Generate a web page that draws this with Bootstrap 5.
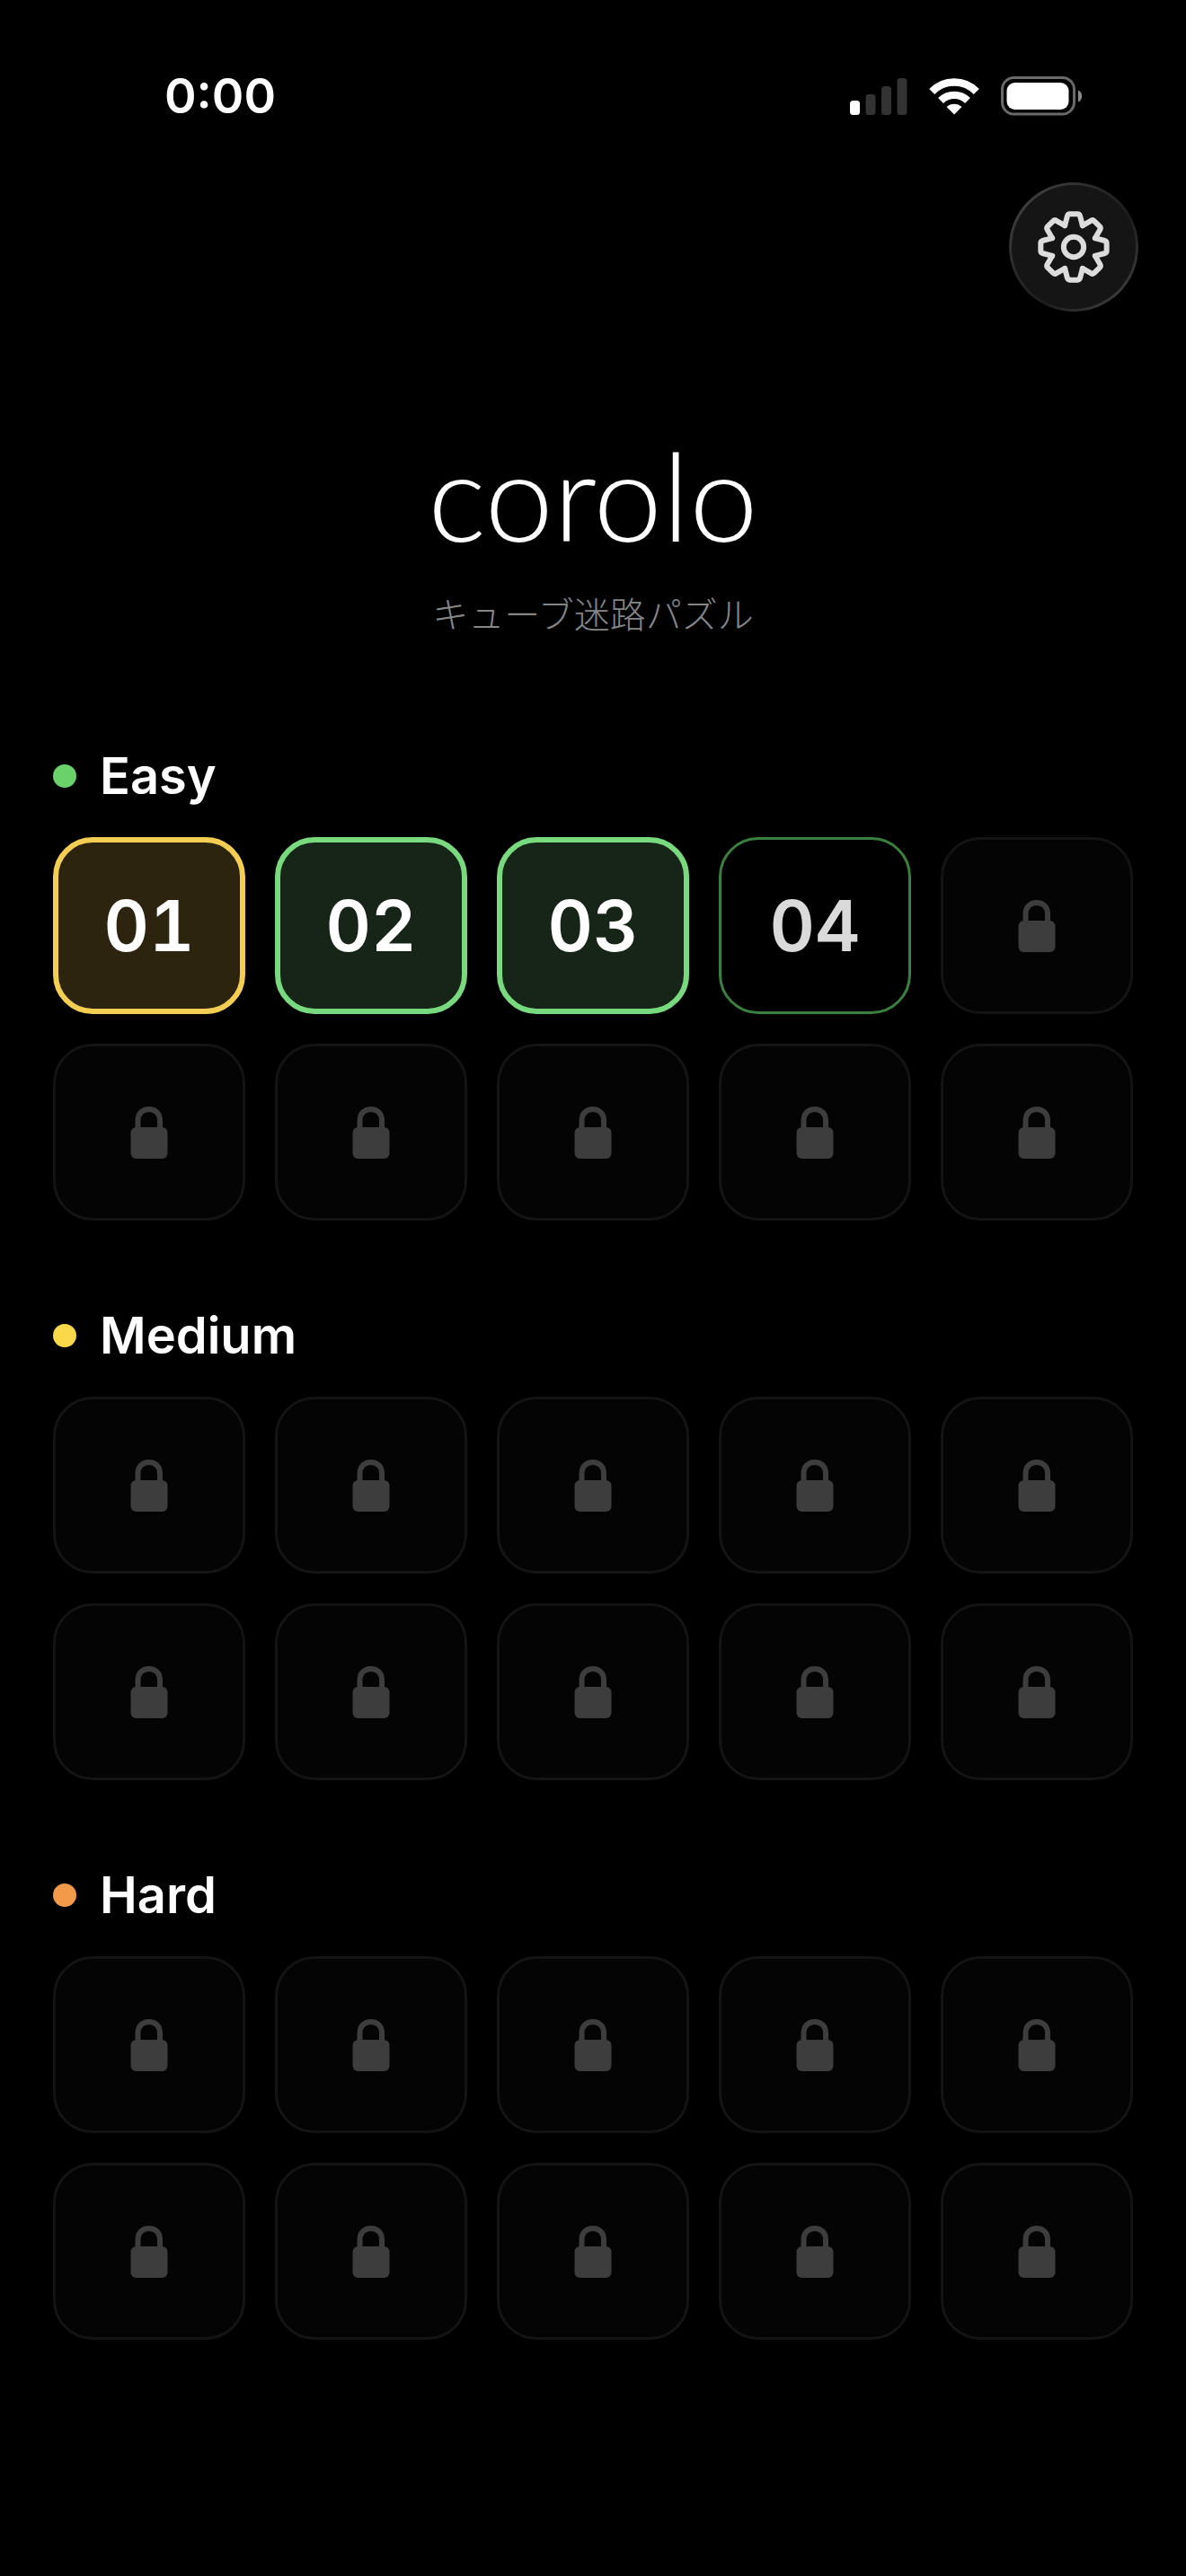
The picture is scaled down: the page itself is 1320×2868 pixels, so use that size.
<!DOCTYPE html>
<html lang="ja" data-bs-theme="dark">
<head>
<meta charset="utf-8">
<meta name="viewport" content="width=device-width, initial-scale=1">
<title>corolo</title>
<link href="https://cdn.jsdelivr.net/npm/bootstrap@5.3.0/dist/css/bootstrap.min.css" rel="stylesheet">
<style>
  body { background: #000; color: #fff; font-family: Inter, "Noto Sans CJK JP", sans-serif; }
  .status-bar { padding: 71px 116px 0 183px; }
  .clock { font-size: 54px; line-height: 72px; font-weight: 600; }
  .status-icons { gap: 24px; }
  .toolbar { padding: 60px 53px 0; }
  .btn-gear {
    width: 144px; height: 144px; border: 3px solid transparent;
    background: linear-gradient(#151515, #151515) padding-box,
                linear-gradient(135deg, #4a4a4a, #2a2a2a 35%, #1c1c1c 60%, #4a4a4a) border-box;
  }
  .app-title { font-family: Lato, Inter, sans-serif; font-size: 137px; line-height: 160px; font-weight: 300; margin: 123px 0 22px; }
  .app-subtitle { font-family: "Noto Sans CJK JP", sans-serif; font-size: 40px; line-height: 60px; font-weight: 300; color: #868686; margin-bottom: 120px; }
  .levels { padding: 0 59px; }
  .level-group { margin-bottom: 96px; }
  .level-head { gap: 26px; height: 64px; margin-bottom: 36px; }
  .level-head h2 { font-size: 56px; line-height: 64px; font-weight: 600; }
  .level-dot { width: 26px; height: 26px; }
  .dot-easy { background: #6bd16b; }
  .dot-medium { background: #f9d949; }
  .dot-hard { background: #f2994a; }
  .level-grid { --bs-gutter-x: 33px; --bs-gutter-y: 33px; }
  .tile {
    height: 197px; border-radius: 44px; border: 3px solid #141414; background: #040404;
    font-size: 78px; line-height: 80px; font-weight: 600; font-variant-numeric: tabular-nums; color: #fff;
  }
  .tile:disabled { opacity: 1; border-color: #141414; background: #040404; }
  .tile-gold { border: 6px solid #f3ce53; background: #2d2410; }
  .tile-done { border: 6px solid #78d97e; background: #172518; }
  .tile-open { border-color: #3a803e; background: #000; color: #dadada; }
</style>
<script src="https://cdn.jsdelivr.net/npm/bootstrap@5.3.0/dist/js/bootstrap.bundle.min.js"></script>
</head>
<body>
<svg class="d-none" aria-hidden="true">
  <symbol id="lock" viewBox="0 0 42 58">
    <rect x="0.5" y="23" width="41" height="35" rx="6" fill="#3d3d3d"/>
    <path d="M8.5 25V15.5C8.5 8 13.5 3 20.8 3S33 8 33 15.5V25" fill="none" stroke="#3d3d3d" stroke-width="6"/>
  </symbol>
</svg>

<div class="status-bar d-flex align-items-center justify-content-between">
  <span class="clock">0:00</span>
  <div class="status-icons d-flex align-items-center">
    <svg width="64" height="42" viewBox="0 0 64 42" role="img" aria-label="Signal">
      <rect x="0" y="26" width="11" height="16" rx="3.5" fill="#fff"/>
      <g fill="#333"><rect x="17.5" y="19" width="11" height="23" rx="3.5"/><rect x="35" y="10" width="11" height="32" rx="3.5"/><rect x="52.5" y="1" width="11" height="41" rx="3.5"/></g>
    </svg>
    <svg width="56" height="42" viewBox="0 0 56 42" role="img" aria-label="Wi-Fi">
      <g fill="none" stroke="#fff" stroke-width="8.4">
        <path d="M3.2 16A34.5 34.5 0 0 1 52.8 16"/>
        <path d="M13 26A21.5 21.5 0 0 1 43 26"/>
      </g>
      <path d="M28 41.5L19.5 33C24 28.5 32 28.5 36.500 33Z" fill="#fff"/>
    </svg>
    <svg width="90" height="44" viewBox="0 0 90 44" role="img" aria-label="Battery">
      <rect x="1.500" y="1.500" width="80" height="40.500" rx="13" fill="none" stroke="#6a6a6a" stroke-width="3"/>
      <rect x="6.500" y="7" width="69" height="30" rx="9" fill="#fff"/>
      <path d="M86 15.500C91.500 17.500 91.500 26.500 86 28.500Z" fill="#8a8a8a"/>
    </svg>
  </div>
</div>

<div class="toolbar d-flex justify-content-end">
  <button type="button" class="btn btn-gear rounded-circle p-0 d-flex align-items-center justify-content-center" aria-label="Settings">
    <svg width="80" height="80" viewBox="-120 -120 240 240" fill="none" stroke="#dcdcdc" stroke-width="18" stroke-linecap="round" stroke-linejoin="round">
      <path id="tooth" d="M-29.700 -71.600L-21 -104Q-19 -110 -13 -110H13Q19 -110 21 -104L29.700 -71.600"/>
      <use href="#tooth" transform="rotate(45)"/><use href="#tooth" transform="rotate(90)"/><use href="#tooth" transform="rotate(135)"/><use href="#tooth" transform="rotate(180)"/><use href="#tooth" transform="rotate(225)"/><use href="#tooth" transform="rotate(270)"/><use href="#tooth" transform="rotate(315)"/>
      <circle r="33.500"/>
    </svg>
  </button>
</div>

<header class="text-center">
  <h1 class="app-title">corolo</h1>
  <p class="app-subtitle">キューブ迷路パズル</p>
</header>

<main class="levels">
  <section class="level-group">
    <div class="level-head d-flex align-items-center"><span class="level-dot dot-easy rounded-circle"></span><h2 class="mb-0">Easy</h2></div>
    <div class="level-grid row row-cols-5">
      <div class="col"><button type="button" class="btn tile tile-gold w-100 p-0">01</button></div>
      <div class="col"><button type="button" class="btn tile tile-done w-100 p-0">02</button></div>
      <div class="col"><button type="button" class="btn tile tile-done w-100 p-0">03</button></div>
      <div class="col"><button type="button" class="btn tile tile-open w-100 p-0">04</button></div>
      <div class="col"><button type="button" class="btn tile w-100 p-0 d-flex align-items-center justify-content-center" disabled aria-label="Locked"><svg width="42" height="58"><use href="#lock"/></svg></button></div>
      <div class="col"><button type="button" class="btn tile w-100 p-0 d-flex align-items-center justify-content-center" disabled aria-label="Locked"><svg width="42" height="58"><use href="#lock"/></svg></button></div>
      <div class="col"><button type="button" class="btn tile w-100 p-0 d-flex align-items-center justify-content-center" disabled aria-label="Locked"><svg width="42" height="58"><use href="#lock"/></svg></button></div>
      <div class="col"><button type="button" class="btn tile w-100 p-0 d-flex align-items-center justify-content-center" disabled aria-label="Locked"><svg width="42" height="58"><use href="#lock"/></svg></button></div>
      <div class="col"><button type="button" class="btn tile w-100 p-0 d-flex align-items-center justify-content-center" disabled aria-label="Locked"><svg width="42" height="58"><use href="#lock"/></svg></button></div>
      <div class="col"><button type="button" class="btn tile w-100 p-0 d-flex align-items-center justify-content-center" disabled aria-label="Locked"><svg width="42" height="58"><use href="#lock"/></svg></button></div>
    </div>
  </section>

  <section class="level-group">
    <div class="level-head d-flex align-items-center"><span class="level-dot dot-medium rounded-circle"></span><h2 class="mb-0">Medium</h2></div>
    <div class="level-grid row row-cols-5" data-locked="10"></div>
  </section>

  <section class="level-group">
    <div class="level-head d-flex align-items-center"><span class="level-dot dot-hard rounded-circle"></span><h2 class="mb-0">Hard</h2></div>
    <div class="level-grid row row-cols-5" data-locked="10"></div>
  </section>
</main>

<script>
  // Fill the groups whose levels are all still locked.
  const lockedTile = document.querySelector('.tile:disabled').parentElement;
  document.querySelectorAll('[data-locked]').forEach(grid => {
    for (let i = 0; i < Number(grid.dataset.locked); i++) grid.append(lockedTile.cloneNode(true));
  });
</script>
</body>
</html>
